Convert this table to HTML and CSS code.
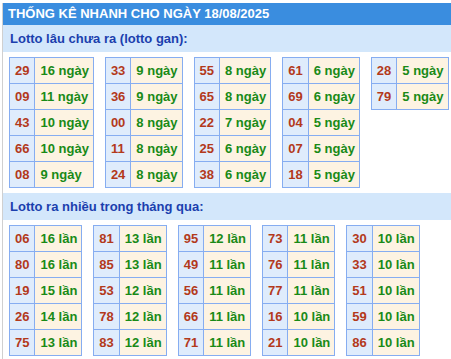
FILE: index.html
```html
<!DOCTYPE html>
<html lang="vi">
<head>
<meta charset="utf-8">
<link rel="stylesheet" href="styles.css">
</head>
<body>
<div class="box">
  <div class="title">THỐNG KÊ NHANH CHO NGÀY 18/08/2025</div>
  <div class="sub">Lotto lâu chưa ra (lotto gan):</div>
  <div class="tables">
    <table><tr><td class="n">29</td><td class="v">16 ngày</td></tr><tr><td class="n">09</td><td class="v">11 ngày</td></tr><tr><td class="n">43</td><td class="v">10 ngày</td></tr><tr><td class="n">66</td><td class="v">10 ngày</td></tr><tr><td class="n">08</td><td class="v">9 ngày</td></tr></table>
    <table><tr><td class="n">33</td><td class="v">9 ngày</td></tr><tr><td class="n">36</td><td class="v">9 ngày</td></tr><tr><td class="n">00</td><td class="v">8 ngày</td></tr><tr><td class="n">11</td><td class="v">8 ngày</td></tr><tr><td class="n">24</td><td class="v">8 ngày</td></tr></table>
    <table><tr><td class="n">55</td><td class="v">8 ngày</td></tr><tr><td class="n">65</td><td class="v">8 ngày</td></tr><tr><td class="n">22</td><td class="v">7 ngày</td></tr><tr><td class="n">25</td><td class="v">6 ngày</td></tr><tr><td class="n">38</td><td class="v">6 ngày</td></tr></table>
    <table><tr><td class="n">61</td><td class="v">6 ngày</td></tr><tr><td class="n">69</td><td class="v">6 ngày</td></tr><tr><td class="n">04</td><td class="v">5 ngày</td></tr><tr><td class="n">07</td><td class="v">5 ngày</td></tr><tr><td class="n">18</td><td class="v">5 ngày</td></tr></table>
    <table><tr><td class="n">28</td><td class="v">5 ngày</td></tr><tr><td class="n">79</td><td class="v">5 ngày</td></tr></table>
  </div>
  <div class="sub">Lotto ra nhiều trong tháng qua:</div>
  <div class="tables">
    <table><tr><td class="n">06</td><td class="v">16 lần</td></tr><tr><td class="n">80</td><td class="v">16 lần</td></tr><tr><td class="n">19</td><td class="v">15 lần</td></tr><tr><td class="n">26</td><td class="v">14 lần</td></tr><tr><td class="n">75</td><td class="v">13 lần</td></tr></table>
    <table><tr><td class="n">81</td><td class="v">13 lần</td></tr><tr><td class="n">85</td><td class="v">13 lần</td></tr><tr><td class="n">53</td><td class="v">12 lần</td></tr><tr><td class="n">78</td><td class="v">12 lần</td></tr><tr><td class="n">83</td><td class="v">12 lần</td></tr></table>
    <table><tr><td class="n">95</td><td class="v">12 lần</td></tr><tr><td class="n">49</td><td class="v">11 lần</td></tr><tr><td class="n">56</td><td class="v">11 lần</td></tr><tr><td class="n">66</td><td class="v">11 lần</td></tr><tr><td class="n">71</td><td class="v">11 lần</td></tr></table>
    <table><tr><td class="n">73</td><td class="v">11 lần</td></tr><tr><td class="n">76</td><td class="v">11 lần</td></tr><tr><td class="n">77</td><td class="v">11 lần</td></tr><tr><td class="n">16</td><td class="v">10 lần</td></tr><tr><td class="n">21</td><td class="v">10 lần</td></tr></table>
    <table><tr><td class="n">30</td><td class="v">10 lần</td></tr><tr><td class="n">33</td><td class="v">10 lần</td></tr><tr><td class="n">51</td><td class="v">10 lần</td></tr><tr><td class="n">59</td><td class="v">10 lần</td></tr><tr><td class="n">86</td><td class="v">10 lần</td></tr></table>
  </div>
</div>
</body>
</html>
```
FILE: styles.css
```css
html, body {
  margin: 0;
  padding: 0;
  background: #fff;
}
body {
  font-family: "Liberation Sans", Arial, sans-serif;
  overflow: hidden;
}
.box {
  margin: 3px 0 0 2px;
  border-left: 1px solid #d0d0d0;
  padding-bottom: 3px;
}
.title {
  background: #3a8ddf;
  color: #fff;
  font-weight: bold;
  font-size: 13px;
  height: 22px;
  line-height: 22px;
  padding-left: 5px;
  white-space: nowrap;
}
.sub {
  background: #d3e7fb;
  color: #1b3fae;
  font-weight: bold;
  font-size: 13px;
  height: 27px;
  line-height: 27px;
  padding-left: 7px;
  white-space: nowrap;
}
.tables {
  display: flex;
  align-items: flex-start;
  gap: 11px;
  padding: 5px 0 5px 6px;
}
table {
  border-collapse: collapse;
  font-size: 13px;
  font-weight: bold;
}
td {
  border: 1px solid #86adf1;
  height: 25px;
  padding: 0 4px 0 5px;
  white-space: nowrap;
}
td.n {
  background: #dfecfc;
  color: #b3391b;
  padding: 0 5px;
}
td.v {
  background: #fdf3e2;
  color: #198a17;
}
```
